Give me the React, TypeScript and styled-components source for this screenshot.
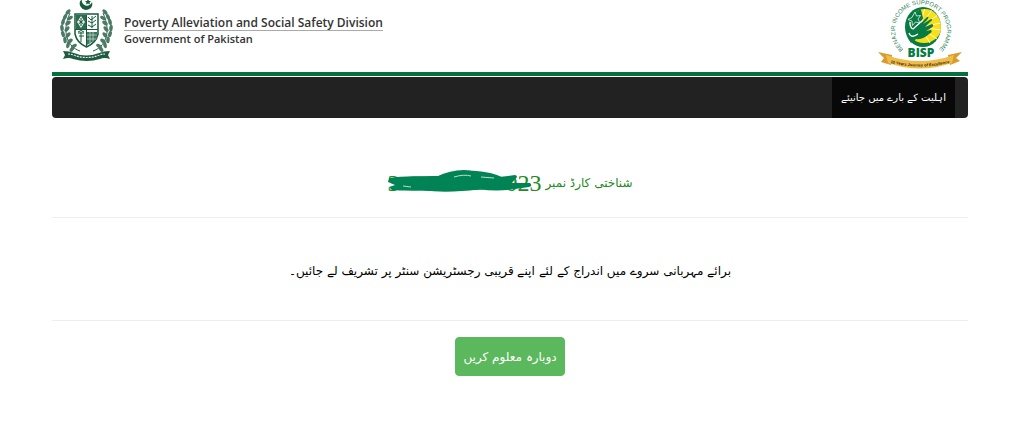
import React from 'react';
import styled, { createGlobalStyle } from 'styled-components';

const GlobalStyle = createGlobalStyle`
  *, *::before, *::after { box-sizing: border-box; }
  body { margin: 0; background: #fff; color: #000; font-family: 'Open Sans', 'DejaVu Sans', sans-serif; }
`;

const urdu = `'DejaVu Sans', sans-serif`;

const Page = styled.div`
  padding: 0 56px 24px 52px;
`;

const Header = styled.header`
  display: flex;
  justify-content: space-between;
  height: 76px;
  padding: 0 5px 0 6px;
  border-bottom: 4px solid #04713c;
`;

const Brand = styled.div`
  display: flex;
  align-items: flex-start;
  gap: 9px;
`;

const BrandText = styled.div`
  padding-top: 15px;
  color: #333;
  font-size: 12px;
  font-weight: 600;
  line-height: 15px;
`;

const Division = styled.div`
  border-bottom: 1px solid #aaa;
`;

const Government = styled.div`
  font-size: 11px;
`;

const Navbar = styled.nav`
  display: flex;
  direction: rtl;
  margin-top: 1px;
  padding: 0 13px;
  background: #222;
  border-radius: 4px;
`;

const NavLink = styled.a`
  padding: 0 9px;
  background: #080808;
  color: #fff;
  font-family: ${urdu};
  font-size: 10px;
  line-height: 41px;
  text-decoration: none;
`;

const Main = styled.main`
  direction: rtl;
  text-align: center;
  font-family: ${urdu};
`;

const CardHeading = styled.h1`
  display: flex;
  justify-content: center;
  align-items: center;
  gap: 4px;
  margin: 0;
  padding: 48px 0 17px;
  border-bottom: 1px solid #eee;
  color: #228b22;
  font-size: 12px;
  font-weight: 400;
  line-height: 34px;
`;

const CardNumber = styled.span`
  position: relative;
  display: flex;
  justify-content: space-between;
  direction: ltr;
  width: 154px;
  font-family: 'Liberation Serif', serif;
  font-size: 24px;
`;

const Scribble = styled.svg`
  position: absolute;
  left: 0;
  top: 4px;
`;

const Message = styled.p`
  margin: 0;
  padding: 36px 0 32px;
  border-bottom: 1px solid #eee;
  font-size: 12px;
  line-height: 34px;
`;

const Retry = styled.button`
  height: 39px;
  margin-top: 16px;
  padding: 0 7px;
  border: 1px solid #5cb85c;
  border-radius: 4px;
  background: #5cb85c;
  color: #fff;
  font-family: ${urdu};
  font-size: 12px;
`;

const leaves = [
  [14, 49, 35], [10, 45, 10], [7, 40, -5], [5, 34, -15], [4, 28, -5],
  [5, 22, 10], [7, 17, 25], [10, 12, 40], [16, 46, 60], [12, 41, 50],
  [10, 35, 40], [9, 29, 40], [10, 23, 50], [12, 18, 60],
];

const LeafSide = () => (
  <g>
    <path d="M22 51C10 47 3 33 12 13" fill="none" stroke="#2d6350" strokeWidth="1" />
    {leaves.map(([x, y, r]) => (
      <ellipse key={`${x}-${y}`} cx={x} cy={y} rx="1.8" ry="3.2" transform={`rotate(${r} ${x} ${y})`} fill="#4a7a67" />
    ))}
  </g>
);

const StateEmblem = () => (
  <svg width="57" height="62" viewBox="0 0 57 62" role="img" aria-label="State Emblem of Pakistan">
    <path d="M24 -1A6.200 6.200 0 1 0 34 2A5 5 0 1 1 24 -1Z" fill="#155b3c" />
    <path d="M30 -1l1 2 2 0-1.500 1.500.5 2-2-1-2 1 .5-2L27 1l2 0Z" fill="#155b3c" />
    <LeafSide />
    <g transform="translate(57 0) scale(-1 1)"><LeafSide /></g>
    <path d="M17 14H40V34Q38 43 28.500 47Q19 43 17 34Z" fill="#fff" stroke="#155b3c" strokeWidth="1.500" />
    <path d="M18 15h10v14H18Z" fill="#2e6a52" />
    <path d="M23 16l4 6-4 6-4-6Z" fill="#e9f0ec" />
    <path d="M23 18v8M20.500 20l5 4M25.500 20l-5 4" stroke="#155b3c" />
    <path d="M30 17l3 3 5-4M30 21l4 2 4-3M30 25l4 2 4-3M34 16v12M17 29.500h23M28.500 15v31" fill="none" stroke="#155b3c" strokeWidth="1" />
    <path d="M20 33h6M21 36h5M23 32v10M20 32q3-3 6 0" fill="none" stroke="#155b3c" />
    <path d="M29 32h10v7l-10 6Z" fill="#3e755f" />
    <path d="M29 35h10M29 39h9M32 32v11M35 32v9" stroke="#cddcd4" strokeWidth=".7" />
    <path d="M5 51q6 0 11 2 12 5 25 0 5-2 11-2l-2 4 2 4q-6-2-10 0-13 4-27 0-4-2-10 0l2-4Z" fill="#1f5b44" />
    <path d="M10 54q4 0 8 2 11 3 21 0 4-2 8-2" fill="none" stroke="#e4ece8" strokeWidth="1.200" strokeDasharray="2 1" />
  </svg>
);

const BispLogo = () => (
  <svg width="86" height="72" viewBox="0 0 86 72" role="img" aria-label="Benazir Income Support Programme">
    <defs>
      <path id="ring" d="M25 48A26 26 0 1 1 63 48" />
      <path id="ribbon" d="M10 62Q43 71 76 62" />
      <clipPath id="disc"><ellipse cx="48" cy="27" rx="16" ry="18" /></clipPath>
    </defs>
    <ellipse cx="46" cy="27" rx="18" ry="20" fill="#087a43" />
    <g clipPath="url(#disc)">
      <circle cx="47" cy="25" r="18" fill="#f9df19" />
      <path d="M43 27L48 7M43 27L55 10M43 27L61 15M43 27L64 23M43 27L64 30M43 27L60 39M43 27L53 43" stroke="#fff9c4" strokeWidth="1" />
      <path d="M26 6H43L46 18L42 30L36 45H24Z" fill="#087a43" />
    </g>
    <path d="M31 28L38 29L50 17Q53 16 50 20L46 24L54 19Q57 19 53 22L48 27L55 24Q58 25 54 28L49 31L54 30Q56 32 52 34Q46 40 39 39L34 43Q28 36 31 28Z" fill="#087a43" />
    <path d="M33 22q0 6 3 7l10-9M32 33q2 6 9 1" fill="none" stroke="#fff" strokeWidth="1.300" />
    <path d="M38 12l1.500 4 4-.5-2.500 3.500 2 4-4.500-1-3 3.500-.5-4.500-4-1.500 4-2Z" fill="#087a43" stroke="#fff" strokeWidth=".7" />
    <text fill="#31845b" fontFamily="Liberation Sans, sans-serif" fontSize="6" textAnchor="middle">
      <textPath href="#ring" startOffset="50%">BENAZIR INCOME SUPPORT PROGRAMME</textPath>
    </text>
    <text x="44" y="57" textAnchor="middle" fill="#087a43" fontFamily="Open Sans, sans-serif" fontWeight="800" fontSize="12">BISP</text>
    <path d="M1 52L15 55L14 65L4 62L7 58ZM85 52L71 55L73 65L83 61L79 58Z" fill="#d99c2c" />
    <path d="M9 55Q43 67 77 55L75 63Q43 74 11 63Z" fill="#efbd4b" />
    <text fill="#3c2907" fontFamily="Liberation Sans, sans-serif" fontWeight="700" fontSize="4" textAnchor="middle">
      <textPath href="#ribbon" startOffset="50%">10 Years Journey of Excellence</textPath>
    </text>
  </svg>
);

export default function App() {
  return (
    <>
      <GlobalStyle />
      <Page>
        <Header>
          <Brand>
            <StateEmblem />
            <BrandText>
              <Division>Poverty Alleviation and Social Safety Division</Division>
              <Government>Government of Pakistan</Government>
            </BrandText>
          </Brand>
          <BispLogo />
        </Header>
        <Navbar>
          <NavLink href="#eligibility" lang="ur">اہلیت کے بارے میں جانیئے</NavLink>
        </Navbar>
        <Main lang="ur">
          <CardHeading>
            <span>شناختی کارڈ نمبر</span>
            <CardNumber>
              <span>3</span>
              <span>023</span>
              <Scribble width="146" height="26" viewBox="0 0 146 26" aria-hidden="true">
                <path d="M2 8Q20 5 48 7Q70 0 90 3Q103 4 112 7L128 5Q132 6 128 9L125 13H143Q146 16 142 17L128 19Q110 22 92 19Q60 24 35 20Q20 21 5 20L2 17L8 15L1 12Z" fill="#008455" />
                <path d="M51 8Q66 0 84 2Q105 3 118 10M4 10Q45 5 126 9M6 18Q60 22 136 15" fill="none" stroke="#008455" strokeWidth="3" strokeLinecap="round" />
                <path d="M67 7q10-3 17-1M94 7l13 1M16 16l8 1" fill="none" stroke="#b9ddcc" strokeWidth="1" />
              </Scribble>
            </CardNumber>
          </CardHeading>
          <Message>برائے مہربانی سروے میں اندراج کے لئے اپنے قریبی رجسٹریشن سنٹر پر تشریف لے جائیں۔</Message>
          <Retry type="button">دوبارہ معلوم کریں</Retry>
        </Main>
      </Page>
    </>
  );
}
